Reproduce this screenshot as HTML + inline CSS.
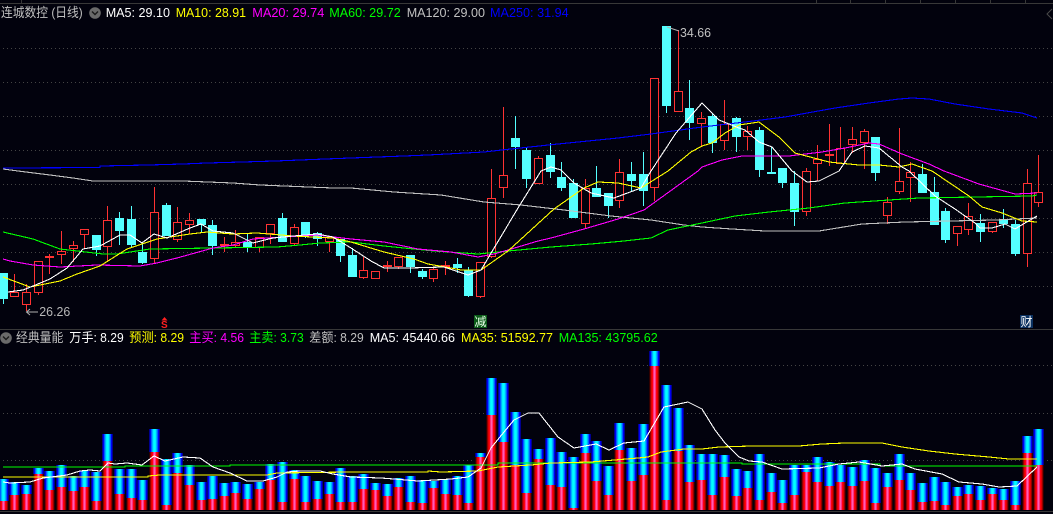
<!DOCTYPE html>
<html lang="zh">
<head>
<meta charset="utf-8">
<title>连城数控 (日线)</title>
<style>
html,body{margin:0;padding:0;background:#02020d;width:1053px;height:514px;overflow:hidden}
svg{display:block;position:absolute;left:0;top:0}
text{font-family:"Liberation Sans","Noto Sans CJK SC",sans-serif;font-size:13px}
.l{fill:none;stroke-width:1.1;shape-rendering:crispEdges}
.g{stroke:#444;stroke-width:1;stroke-dasharray:1 3;shape-rendering:crispEdges}
</style>
</head>
<body>
<svg xmlns="http://www.w3.org/2000/svg" width="1053" height="514" viewBox="0 0 1053 514">
<rect width="1053" height="514" fill="#02020d"/>

<!-- frame -->
<g stroke="#383838" shape-rendering="crispEdges">
<path d="M0 3.5H1053M0 329.5H1053M0 511.5H1053"/>
<path d="M21.5 0V3M816.5 0V3M850.5 0V3M885.5 0V3M920.5 0V3M955.5 0V3M990.5 0V3M1025.5 0V3"/>
</g>
<path d="M1052 9L1047 14L1052 19" fill="none" stroke="#4a4a4a"/>

<!-- grid -->
<path class="g" d="M3 48.5H1053M3 82.5H1053M3 116.5H1053M3 150.5H1053M3 184.5H1053M3 218.5H1053M3 252.5H1053M3 286.5H1053M3 365.5H1053M3 413.5H1053M3 460.5H1053"/>

<g id="vol"></g>
<g id="cand"></g>

<!-- main MA lines -->
<polyline class="l" stroke="#0000ff" points="3,168 100,167.5 100,166 148,165 183,164 207,163 242,162 275,161 300,160 325,159 351,158 404,156 428,155 484,152 511,149 558,144 618,138 651,134 702,127 745,122 785,117 835,108 869,103 899,99 912,98 929,99 955,104 989,109 1022,113 1037,118"/>
<polyline class="l" stroke="#c0c0c0" points="3,169 18,171 50,175 73,178 93,181 183,181 233,183 260,185 333,188 351,188 394,192 441,195 484,202 521,205 564,210 611,216 651,220 684,225 702,227 732,229 765,231 819,231 862,224 905,222 995,220 1037,218"/>
<polyline class="l" stroke="#00ff00" points="3,232 33,239 60,249 103,254 117,254 150,249 213,248 277,247 300,245 320,243 351,242 384,246 434,251 478,254 508,251 551,247 591,244 624,241 651,238 668,230 702,223 735,216 769,212 809,208 845,203 889,200 919,198 1032,196 1037,195"/>
<polyline class="l" stroke="#ff00ff" points="3,259 10,261 33,265 60,267 97,265 140,266 157,263 177,258 213,248 233,245 253,239 283,237 317,235 351,239 384,242 418,249 451,252 478,257 494,254 508,250 538,241 551,238 584,229 618,219 644,210 698,171 702,167 722,160 742,156 789,156 822,152 845,148 869,143 879,144 902,154 929,164 944,171 979,184 1015,194 1037,193"/>
<polyline class="l" stroke="#ffff00" points="3,277 30,287 60,281 77,274 100,266 127,249 157,239 190,234 207,232 233,234 257,233 293,236 333,238 351,242 384,252 414,259 428,264 451,268 461,270 481,270 508,251 554,209 584,188 598,182 618,183 641,188 668,171 691,152 702,146 712,143 725,133 739,125 759,122 779,137 795,153 829,162 859,165 879,165 899,167 912,164 932,171 969,196 982,207 1002,213 1022,221 1037,222"/>
<polyline class="l" stroke="#ffffff" points="8,292 23,290 33,286 50,279 67,268 83,249 100,246 120,235 130,235 142,243 154,234 167,238 190,228 201,224 213,231 233,233 253,243 273,238 293,236 317,234 333,237 351,248 371,261 384,268 408,268 444,267 468,275 481,270 518,208 541,171 551,167 561,170 574,183 591,193 614,198 641,188 651,171 676,133 702,103 719,120 739,128 745,130 759,142 772,147 792,171 807,182 819,181 839,171 852,152 865,146 879,148 902,167 909,171 935,196 955,209 975,223 980,228 992,228 1005,224 1015,229 1025,223 1037,216"/>

<!-- volume lines -->
<polyline class="l" stroke="#00ff00" points="3,467 125,467 125,466 230,466 230,465 498,465 498,463 742,463 742,464 880,464 880,466 1037,466"/>
<polyline class="l" stroke="#ffff00" points="3,477 148,477 148,476 160,475 267,475 277,473 351,472 428,472 428,471 441,472 478,471 498,467 531,465 551,463 591,462 638,458 648,457 661,452 684,449 702,449 719,447 752,446 799,446 822,444 845,443 882,443 902,447 929,451 955,454 989,457 1009,459 1037,459"/>
<polyline class="l" stroke="#ffffff" points="3,482 10,483 30,482 43,478 67,475 80,471 90,470 100,471 108,463 115,464 127,463 142,465 154,456 165,461 183,457 200,458 213,467 230,473 247,481 263,481 277,477 287,472 300,471 320,471 333,474 351,477 381,478 394,479 418,481 451,479 468,477 481,468 491,448 504,432 514,420 528,413 539,413 558,437 574,448 596,444 609,450 624,443 644,441 664,407 688,402 702,409 715,430 725,443 739,457 749,461 762,462 782,469 819,468 839,464 859,462 882,466 902,464 915,469 942,474 959,482 982,484 999,487 1017,486 1037,467"/>

<!-- price labels -->
<path d="M667 27L679 31" stroke="#b0b0b0" fill="none"/>
<text x="680" y="37" fill="#c0c0c0" textLength="31" lengthAdjust="spacingAndGlyphs">34.66</text>
<path d="M38 312H27M30 309L26.5 312L30 315" stroke="#b0b0b0" fill="none"/>
<text x="39.3" y="316" fill="#b8b8b8" textLength="31" lengthAdjust="spacingAndGlyphs">26.26</text>

<!-- markers -->
<path d="M164.5 317L161.5 320.5H167.5Z" fill="#ff2020"/>
<text x="161" y="328" fill="#ff2020" style="font-size:10px;font-weight:bold">S</text>
<rect x="474" y="315" width="13" height="13" fill="#0a5a18"/>
<text x="474.5" y="326" fill="#e8ffe8" style="font-size:12px">减</text>
<rect x="1020" y="315" width="13" height="13" fill="#0a3060"/>
<text x="1020.5" y="326" fill="#ffffff" style="font-size:12px">财</text>

<!-- header -->
<text x="1" y="17" fill="#c0c0c0" textLength="81.7" lengthAdjust="spacingAndGlyphs">连城数控 (日线)</text>
<circle cx="95" cy="13" r="5.8" fill="#6a6a6a"/>
<path d="M92 11.5L95 14.5L98 11.5" stroke="#1a1a1a" stroke-width="1.4" fill="none"/>
<text x="105.7" y="17" fill="#ffffff" textLength="64.3" lengthAdjust="spacingAndGlyphs">MA5: 29.10</text>
<text x="175.7" y="17" fill="#ffff00" textLength="70.3" lengthAdjust="spacingAndGlyphs">MA10: 28.91</text>
<text x="252.3" y="17" fill="#ff00ff" textLength="72" lengthAdjust="spacingAndGlyphs">MA20: 29.74</text>
<text x="329.3" y="17" fill="#00ff00" textLength="71.4" lengthAdjust="spacingAndGlyphs">MA60: 29.72</text>
<text x="406.7" y="17" fill="#c0c0c0" textLength="78.3" lengthAdjust="spacingAndGlyphs">MA120: 29.00</text>
<text x="490" y="17" fill="#0000ff" textLength="78.7" lengthAdjust="spacingAndGlyphs">MA250: 31.94</text>

<!-- volume header -->
<circle cx="6" cy="338" r="5.8" fill="#6a6a6a"/>
<path d="M3 336.5L6 339.5L9 336.5" stroke="#1a1a1a" stroke-width="1.4" fill="none"/>
<text x="16" y="342" fill="#c0c0c0" textLength="47.3" lengthAdjust="spacingAndGlyphs">经典量能</text>
<text x="69.3" y="342" fill="#ffffff" textLength="54.4" lengthAdjust="spacingAndGlyphs">万手: 8.29</text>
<text x="129.3" y="342" fill="#ffff00" textLength="54.7" lengthAdjust="spacingAndGlyphs">预测: 8.29</text>
<text x="189.3" y="342" fill="#ff00ff" textLength="54.7" lengthAdjust="spacingAndGlyphs">主买: 4.56</text>
<text x="249.3" y="342" fill="#00ff00" textLength="54.4" lengthAdjust="spacingAndGlyphs">主卖: 3.73</text>
<text x="309.3" y="342" fill="#c0c0c0" textLength="54.4" lengthAdjust="spacingAndGlyphs">差额: 8.29</text>
<text x="369.7" y="342" fill="#ffffff" textLength="85.3" lengthAdjust="spacingAndGlyphs">MA5: 45440.66</text>
<text x="461" y="342" fill="#ffff00" textLength="92" lengthAdjust="spacingAndGlyphs">MA35: 51592.77</text>
<text x="558.7" y="342" fill="#00ff00" textLength="99" lengthAdjust="spacingAndGlyphs">MA135: 43795.62</text>
</svg>
<script>
var C=[[1,273,273,299,304],[0,274,292,297,297],[0,284,292,305,311],[0,261,261,293,295],[0,254,256,258,274],[0,231,251,255,264],[0,241,245,249,262],[0,229,229,235,249],[1,235,235,250,256],[0,206,220,247,261],[1,212,218,231,245],[1,206,219,245,248],[1,242,252,263,264],[0,187,212,259,263],[1,203,205,236,236],[0,207,222,240,242],[0,213,220,225,234],[1,219,219,225,232],[1,220,225,246,255],[0,237,244,246,252],[0,230,242,246,248],[1,234,242,247,252],[0,237,237,248,252],[0,224,224,234,244],[1,213,218,242,242],[0,224,227,244,245],[1,222,222,236,238],[1,232,233,239,246],[0,237,237,242,252],[1,239,239,256,262],[1,248,255,277,277],[0,257,270,278,279],[0,271,271,279,279],[0,261,265,267,272],[0,257,257,267,269],[1,255,255,267,273],[1,269,271,277,279],[0,268,269,279,282],[0,261,265,267,275],[1,258,264,268,273],[1,267,270,296,297],[0,262,262,297,298],[0,169,198,257,258],[0,107,175,188,198],[1,116,138,147,169],[1,147,150,179,188],[0,156,158,184,184],[1,143,155,172,178],[1,162,177,188,191],[1,179,183,218,218],[0,179,188,224,229],[1,166,188,197,197],[1,193,193,206,218],[0,159,172,201,208],[1,162,174,181,191],[1,152,174,191,206],[0,78,78,188,201],[1,26,26,106,113],[0,30,91,112,112],[1,80,108,123,140],[0,112,118,124,147],[1,113,116,143,153],[0,100,124,141,150],[1,117,118,137,152],[0,126,131,137,150],[1,127,130,170,177],[1,147,172,174,174],[1,168,168,183,188],[1,171,183,212,226],[0,168,171,212,216],[0,145,159,164,181],[0,124,154,155,166],[0,127,148,164,164],[0,127,139,145,153],[0,129,131,143,169],[1,137,137,173,181],[0,197,202,216,224],[0,128,181,192,194],[0,162,172,178,202],[1,164,174,193,193],[1,177,192,225,225],[1,208,211,240,243],[0,226,226,234,246],[0,203,216,230,235],[1,214,223,232,242],[0,222,222,232,233],[1,209,220,224,228],[1,220,224,254,256],[0,169,183,254,267],[0,155,192,203,207]];
var V=[[462,528],[471,510],[480,507],[429,447],[438,495],[420,486],[453,498],[438,486],[441,528],[327,408],[432,507],[432,519],[465,525],[312,381],[402,540],[384,444],[420,480],[471,525],[453,522],[474,513],[471,504],[477,522],[471,492],[417,465],[411,531],[435,462],[453,531],[468,522],[471,507],[429,531],[454,531],[447,492],[474,495],[477,513],[460,486],[453,531],[465,534],[468,489],[462,507],[453,510],[421,534],[384,396],[159,270],[174,351],[261,420],[342,504],[372,402],[339,480],[381,486],[396,549],[327,384],[348,468],[423,510],[294,375],[369,468],[297,450],[78,123],[180,525],[249,378],[360,471],[387,465],[387,510],[390,456],[432,513],[438,489],[387,525],[444,501],[465,534],[420,510],[420,441],[396,471],[411,483],[420,471],[426,483],[405,468],[429,534],[444,486],[387,465],[444,495],[474,531],[456,528],[471,540],[486,513],[480,507],[483,525],[489,507],[492,525],[468,540],[333,384],[312,420]];
var BL=["#000090","#0000f0","#0060ff","#00b0ff","#00f0ff","#00ffff","#00f0ff","#00b0ff","#0060ff","#0000f0","#000090"];
var RD=["#300000","#900000","#e00000","#ff0010","#ff3080","#ff60b0","#ff3080","#ff0010","#e00000","#900000","#300000"];
var NS="http://www.w3.org/2000/svg";
function add(g,t,a){var e=document.createElementNS(NS,t);for(var k in a)e.setAttribute(k,a[k]);e.setAttribute("shape-rendering","crispEdges");g.appendChild(e);}
var cg=document.getElementById("cand"),vg=document.getElementById("vol");
function px(i){return Math.floor(3.2+11.636*i);}
C.forEach(function(c,i){
  var p=px(i),col=c[0]?"#54ffff":"#ff3232",h=Math.max(2,c[3]-c[2]);
  if(c[4]>c[1])add(cg,"rect",{x:p,y:c[1],width:1,height:c[4]-c[1],fill:col});
  add(cg,"rect",{x:p-4,y:c[2],width:9,height:h,fill:col});
  if(!c[0]&&h>2)add(cg,"rect",{x:p-3,y:c[2]+1,width:7,height:h-2,fill:"#02020d"});
});
V.forEach(function(v,i){
  var p=px(i),t=Math.round(325+v[0]/3),s=Math.round(325+v[1]/3),b=509;
  for(var k=0;k<11;k++){
    add(vg,"rect",{x:p-5+k,y:t,width:1,height:s-t,fill:BL[k]});
    add(vg,"rect",{x:p-5+k,y:s,width:1,height:b-s+1,fill:RD[k]});
  }
});
</script>
</body>
</html>
